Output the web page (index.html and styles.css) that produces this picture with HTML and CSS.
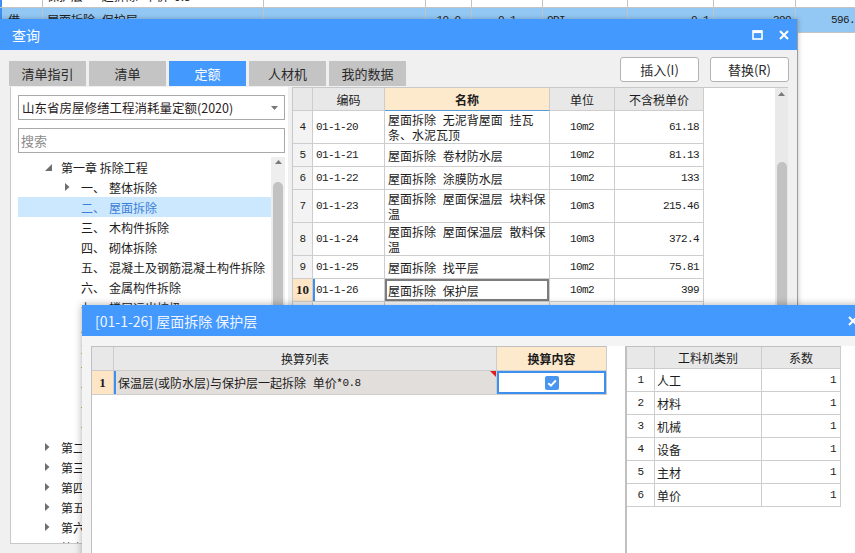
FILE: index.html
```html
<!DOCTYPE html>
<html lang="zh-CN">
<head>
<meta charset="utf-8">
<title>查询</title>
<link rel="stylesheet" href="styles.css">
</head>
<body>
<div class="sheet">
  <div class="c mark"></div>
  <div class="c">保护层 一起拆除 单价*0.8</div>
  <div class="c"></div><div class="c"></div><div class="c"></div><div class="c"></div><div class="c"></div><div class="c"></div><div class="c"></div>
  <div class="c sel mark">借</div>
  <div class="c sel">屋面拆除 保护层</div>
  <div class="c sel"></div>
  <div class="c sel mono ctr">10.0</div>
  <div class="c sel mono ctr">0.1</div>
  <div class="c sel mono">ODI</div>
  <div class="c sel mono rt">0.1</div>
  <div class="c sel mono rt">399</div>
  <div class="c sel mono rt">596.5</div>
</div>

<div class="qwin">
  <div class="qtitle">
    <span class="ttext">查询</span>
    <span class="ticons">
      <svg width="11" height="10" viewBox="0 0 11 10"><rect x="1" y="1" width="9" height="8" fill="none" stroke="#fff" stroke-width="1.6"/><rect x="1" y="0.5" width="9" height="2.6" fill="#fff"/></svg>
      <svg width="10" height="10" viewBox="0 0 10 10"><path d="M1 1 L9 9 M9 1 L1 9" stroke="#fff" stroke-width="2" fill="none"/></svg>
    </span>
  </div>
  <div class="toprow">
    <div class="tabs">
      <div class="tab">清单指引</div>
      <div class="tab">清单</div>
      <div class="tab on">定额</div>
      <div class="tab">人材机</div>
      <div class="tab">我的数据</div>
    </div>
    <div class="btns">
      <div class="btn">插入(I)</div>
      <div class="btn">替换(R)</div>
    </div>
  </div>
  <div class="main">
    <div class="left">
      <div class="combo"><span>山东省房屋修缮工程消耗量定额(2020)</span><svg width="7" height="4" viewBox="0 0 7 4"><polygon points="0,0 7,0 3.5,4" fill="#777"/></svg></div>
      <div class="search">搜索</div>
      <div class="tree">
        <div class="tlist">
          <div class="trow l0"><span class="tog"><svg width="7" height="7" viewBox="0 0 7 7"><polygon points="7,0 7,7 0,7" fill="#6e6e6e"/></svg></span><span>第一章 拆除工程</span></div>
          <div class="trow l1"><span class="tog"><svg width="5" height="8" viewBox="0 0 5 8"><polygon points="0,0 4.5,4 0,8" fill="#6e6e6e"/></svg></span><span class="no">一、</span><span>整体拆除</span></div>
          <div class="trow l1 sel"><span class="tog"></span><span class="no">二、</span><span>屋面拆除</span></div>
          <div class="trow l1"><span class="tog"></span><span class="no">三、</span><span>木构件拆除</span></div>
          <div class="trow l1"><span class="tog"></span><span class="no">四、</span><span>砌体拆除</span></div>
          <div class="trow l1"><span class="tog"></span><span class="no">五、</span><span>混凝土及钢筋混凝土构件拆除</span></div>
          <div class="trow l1"><span class="tog"></span><span class="no">六、</span><span>金属构件拆除</span></div>
          <div class="trow l1"><span class="tog"></span><span class="no">七、</span><span>楼层运出垃圾</span></div>
          <div class="trow l1"><span class="tog"></span><span class="no">八、</span><span>楼地面拆除</span></div>
          <div class="trow l1"><span class="tog"></span><span class="no">九、</span><span>墙面拆除</span></div>
          <div class="trow l1"><span class="tog"></span><span class="no">十、</span><span>门窗拆除</span></div>
          <div class="trow l1"><span class="tog"></span><span class="no">十一、</span><span>装饰拆除</span></div>
          <div class="trow l1"><span class="tog"></span><span class="no">十二、</span><span>管道拆除</span></div>
          <div class="trow l1"><span class="tog"></span><span class="no">十三、</span><span>其他拆除</span></div>
          <div class="trow l0"><span class="tog"><svg width="5" height="8" viewBox="0 0 5 8"><polygon points="0,0 4.5,4 0,8" fill="#6e6e6e"/></svg></span><span>第二章 土石方工程</span></div>
          <div class="trow l0"><span class="tog"><svg width="5" height="8" viewBox="0 0 5 8"><polygon points="0,0 4.5,4 0,8" fill="#6e6e6e"/></svg></span><span>第三章 地基基础工程</span></div>
          <div class="trow l0"><span class="tog"><svg width="5" height="8" viewBox="0 0 5 8"><polygon points="0,0 4.5,4 0,8" fill="#6e6e6e"/></svg></span><span>第四章 砌筑工程</span></div>
          <div class="trow l0"><span class="tog"><svg width="5" height="8" viewBox="0 0 5 8"><polygon points="0,0 4.5,4 0,8" fill="#6e6e6e"/></svg></span><span>第五章 混凝土工程</span></div>
          <div class="trow l0"><span class="tog"><svg width="5" height="8" viewBox="0 0 5 8"><polygon points="0,0 4.5,4 0,8" fill="#6e6e6e"/></svg></span><span>第六章 木结构工程</span></div>
          <div class="trow l0"><span class="tog"><svg width="5" height="8" viewBox="0 0 5 8"><polygon points="0,0 4.5,4 0,8" fill="#6e6e6e"/></svg></span><span>第七章 屋面工程</span></div>
        </div>
        <div class="vscroll">
          <svg class="up" width="7" height="4" viewBox="0 0 7 4"><polygon points="0,4 3.5,0 7,4" fill="#7a7a7a"/></svg>
          <div class="thumb t1"></div>
        </div>
      </div>
    </div>
    <div class="right">
      <div class="gmain">
        <div class="h"></div><div class="h">编码</div><div class="h peach">名称</div><div class="h">单位</div><div class="h">不含税单价</div>

        <div class="rn">4</div><div class="code">01-1-20</div><div class="name">屋面拆除 无泥背屋面 挂瓦<br>条、水泥瓦顶</div><div class="unit">10m2</div><div class="price">61.18</div>
        <div class="rn">5</div><div class="code">01-1-21</div><div class="name">屋面拆除 卷材防水层</div><div class="unit">10m2</div><div class="price">81.13</div>
        <div class="rn">6</div><div class="code">01-1-22</div><div class="name">屋面拆除 涂膜防水层</div><div class="unit">10m2</div><div class="price">133</div>
        <div class="rn">7</div><div class="code">01-1-23</div><div class="name">屋面拆除 屋面保温层 块料保<br>温</div><div class="unit">10m3</div><div class="price">215.46</div>
        <div class="rn">8</div><div class="code">01-1-24</div><div class="name">屋面拆除 屋面保温层 散料保<br>温</div><div class="unit">10m3</div><div class="price">372.4</div>
        <div class="rn">9</div><div class="code">01-1-25</div><div class="name">屋面拆除 找平层</div><div class="unit">10m2</div><div class="price">75.81</div>
        <div class="rn cur">10</div><div class="code cur">01-1-26</div><div class="name cur">屋面拆除 保护层</div><div class="unit">10m2</div><div class="price">399</div>
        <div class="rn">11</div><div class="code">01-1-27</div><div class="name">屋面拆除 保温层与保护层一<br>起拆除</div><div class="unit">10m2</div><div class="price">564.35</div>
      </div>
      <div class="blank"></div>
      <div class="vscroll2">
        <svg class="up" width="7" height="4" viewBox="0 0 7 4"><polygon points="0,4 3.5,0 7,4" fill="#7a7a7a"/></svg>
        <div class="thumb t2"></div>
      </div>
    </div>
  </div>
</div>

<div class="dlg">
  <div class="dtitle">
    <span class="dtext">[01-1-26] 屋面拆除 保护层</span>
    <svg class="dclose" width="10" height="10" viewBox="0 0 10 10"><path d="M1 1 L9 9 M9 1 L1 9" stroke="#fff" stroke-width="2" fill="none"/></svg>
  </div>
  <div class="dbody">
    <div class="dleft">
      <div class="gconv">
        <div class="h"></div><div class="h">换算列表</div><div class="h peach b">换算内容</div>
        <div class="rn cur">1</div>
        <div class="item">保温层(或防水层)与保护层一起拆除 单价*<span class="mono">0.8</span><span class="flag"></span></div>
        <div class="chk"><svg width="14" height="14" viewBox="0 0 14 14"><rect width="14" height="14" rx="2" fill="#4896f0"/><path d="M3.3 7.2 L6 9.7 L10.8 4.5" stroke="#fff" stroke-width="1.9" fill="none"/></svg></div>
      </div>
    </div>
    <div class="dright">
      <div class="gcoef">
        <div class="h"></div><div class="h">工料机类别</div><div class="h">系数</div>
        <div class="n">1</div><div class="k">人工</div><div class="v">1</div>
        <div class="n">2</div><div class="k">材料</div><div class="v">1</div>
        <div class="n">3</div><div class="k">机械</div><div class="v">1</div>
        <div class="n">4</div><div class="k">设备</div><div class="v">1</div>
        <div class="n">5</div><div class="k">主材</div><div class="v">1</div>
        <div class="n">6</div><div class="k">单价</div><div class="v">1</div>
      </div>
    </div>
  </div>
</div>
</body>
</html>
```

FILE: styles.css
```css
* { box-sizing: border-box; }
html, body { margin: 0; padding: 0; }
body {
  width: 855px;
  height: 553px;
  overflow: hidden;
  position: relative;
  background: #fff;
  font-family: "Noto Sans CJK SC", "Noto Sans", sans-serif;
  font-size: 12px;
  color: #1c1c1c;
}

.mono, .code, .unit, .price, .gmain .rn, .gcoef .n, .gcoef .v {
  font-family: "Liberation Mono", "DejaVu Sans Mono", monospace;
  font-size: 11px;
  letter-spacing: -0.6px;
}

/* background spreadsheet */
.sheet {
  margin-top: -16px;
  display: grid;
  grid-template-columns: 43px 221px 162px 46px 71px 85px 86px 82px 70px;
  grid-template-rows: 24px 25px;
  width: 866px;
  word-spacing: 4px;
}
.sheet .c {
  border-right: 1px solid #c4c4c4;
  border-bottom: 1px solid #c4c4c4;
  line-height: 24px;
  white-space: nowrap;
  overflow: hidden;
  padding: 0 4px;
}
.sheet .sel { background: #93c8f5; }
.sheet .mark { box-shadow: inset 2px 0 #3d8ff0; padding-left: 8px; }
.sheet .ctr { text-align: center; }
.sheet .rt { text-align: right; }

/* query window */
.qwin {
  position: absolute;
  left: 0;
  top: 19px;
  width: 798px;
  height: 560px;
  background: #f0f0f0;
  border-right: 1px solid #9c9c9c;
  box-shadow: 0 0 5px rgba(0, 0, 0, 0.25);
  display: flex;
  flex-direction: column;
}
.qtitle {
  height: 31px;
  flex: none;
  background: #4499ff;
  color: #fff;
  display: flex;
  align-items: center;
  padding: 0 8px 0 12px;
  font-size: 14px;
}
.ttext { flex: 1; }
.ticons { display: flex; align-items: center; gap: 16px; }

.toprow {
  height: 36px;
  flex: none;
  display: flex;
  justify-content: space-between;
  padding: 7px 8px 0 9px;
}
.tabs { display: flex; gap: 3px; align-self: flex-end; }
.tab {
  width: 77px;
  height: 25px;
  background: #c4c4c4;
  color: #2a2a2a;
  font-size: 13px;
  display: flex;
  align-items: center;
  justify-content: center;
}
.tab.on { background: #4499ff; color: #fff; }
.btns { display: flex; gap: 11px; align-self: flex-start; }
.btn {
  width: 79px;
  height: 25px;
  border: 1px solid #b3b3b3;
  border-radius: 3px;
  background: #fff;
  color: #2a2a2a;
  font-size: 13px;
  display: flex;
  align-items: center;
  justify-content: center;
}

.main {
  flex: 1;
  display: flex;
  align-items: flex-start;
  padding: 1px 0 0 10px;
  min-height: 0;
}
.left {
  width: 278px;
  height: 457px;
  flex: none;
  background: #fff;
  border-left: 1px solid #c8c8c8;
  border-bottom: 1px solid #c8c8c8;
  padding: 8px 3px 0 7px;
  display: flex;
  flex-direction: column;
}
.combo {
  height: 25px;
  flex: none;
  border: 1px solid #a9a9a9;
  display: flex;
  align-items: center;
  justify-content: space-between;
  padding: 0 6px 0 3px;
  font-size: 12.5px;
  color: #2b1d1d;
}
.search {
  height: 25px;
  flex: none;
  margin-top: 8px;
  border: 1px solid #a9a9a9;
  padding-left: 2px;
  display: flex;
  align-items: center;
  color: #8c8c8c;
  font-size: 13px;
}
.tree {
  margin-top: 4px;
  flex: 1;
  display: flex;
  min-height: 0;
  overflow: hidden;
}
.tlist { width: 253px; flex: none; }
.trow {
  height: 20px;
  display: flex;
  align-items: center;
  white-space: nowrap;
  font-size: 12px;
}
.trow.l0 { padding-left: 27px; }
.trow.l1 { padding-left: 47px; }
.trow.sel { background: #cce8ff; color: #3d7fd6; }
.tog { width: 16px; height: 20px; flex: none; display: flex; align-items: center; }
.no { width: 28px; flex: none; }
.vscroll {
  width: 14px;
  flex: none;
  background: #eeeeee;
  display: flex;
  flex-direction: column;
  align-items: center;
}
.vscroll .up { margin-top: 3px; flex: none; }
.thumb { background: #c2c2c2; border-radius: 5px 5px 0 0; width: 10px; flex: 1; }
.t1 { margin-top: 18px; }

.right {
  margin-left: 4px;
  width: 496px;
  height: 480px;
  flex: none;
  background: #fff;
  border-left: 1px solid #c8c8c8;
  border-top: 1px solid #c8c8c8;
  display: flex;
}
.gmain {
  width: 411px;
  flex: none;
  display: grid;
  grid-template-columns: 20px 72px 165px 65px 89px;
  grid-template-rows: 23px 33px 23px 23px 33px 33px 23px 23px 33px;
  align-self: flex-start;
}
.gmain > div, .gconv > div, .gcoef > div {
  border-right: 1px solid #cdcdcd;
  border-bottom: 1px solid #cdcdcd;
  display: flex;
  align-items: center;
  overflow: hidden;
  white-space: nowrap;
  position: relative;
}
.h { background: #e8e8e8; justify-content: center; font-size: 12px; }
.h.peach { background: #fde9cc; }
.gmain .h.peach { font-weight: bold; border-bottom-color: #5b9bd5; }
.h.b { font-weight: bold; }
.gmain .rn { background: #f3f3f3; justify-content: center; }
.code { padding-left: 3px; }
.name { padding-left: 3px; line-height: 15px; word-spacing: 4px; }
.unit { justify-content: center; }
.price { justify-content: flex-end; padding-right: 4px; }
.rn.cur {
  background: #fde5c5;
  font-family: "Liberation Serif", serif;
  font-weight: bold;
  font-size: 13px;
  letter-spacing: 0;
  justify-content: center;
}
.code.cur { box-shadow: inset 2px 0 #3d8ff0; }
.name.cur { box-shadow: inset 0 0 0 2px #7d7d7d; }
.blank { flex: 1; }
.vscroll2 {
  width: 13px;
  flex: none;
  background: #e9e9e9;
  display: flex;
  flex-direction: column;
  align-items: center;
}
.vscroll2 .up { margin-top: 4px; flex: none; }
.t2 { margin-top: 66px; }

/* conversion dialog */
.dlg {
  position: absolute;
  left: 82px;
  top: 305px;
  width: 790px;
  height: 260px;
  background: #f4f4f4;
  box-shadow: 0 0 8px rgba(0, 0, 0, 0.32);
  display: flex;
  flex-direction: column;
}
.dtitle {
  height: 31px;
  flex: none;
  background: #4499ff;
  color: #eef5ff;
  font-size: 14px;
  display: flex;
  align-items: center;
  padding: 0 14px 0 13px;
}
.dtext { flex: 1; }
.dbody {
  flex: 1;
  display: flex;
  padding: 10px 0 0 9px;
}
.dleft {
  width: 534px;
  flex: none;
  background: #fff;
  border-left: 1px solid #c0c0c0;
}
.dright {
  flex: 1;
  background: #fff;
  border-left: 2px solid #c0c0c0;
}
.gconv {
  width: 515px;
  display: grid;
  grid-template-columns: 22px 383px 110px;
  grid-template-rows: 24px 24px;
  border-top: 1px solid #c0c0c0;
}
.gconv .item {
  background: #e2dedb;
  box-shadow: inset 2px 0 #3d8ff0;
  padding-left: 4px;
  word-spacing: 4px;
}
.gconv .item .mono { word-spacing: 0; }
.flag {
  position: absolute;
  top: 0;
  right: 0;
  width: 0;
  height: 0;
  border-top: 6px solid #e01e1e;
  border-left: 6px solid transparent;
}
.gconv .chk {
  justify-content: center;
  box-shadow: inset 0 0 0 2px #3d8ff0;
}
.gcoef {
  width: 214px;
  display: grid;
  grid-template-columns: 28px 107px 79px;
  grid-template-rows: 22px repeat(6, 23px);
  border-top: 1px solid #c0c0c0;
}
.gcoef .n { justify-content: center; }
.gcoef .k { padding-left: 2px; }
.gcoef .v { justify-content: flex-end; padding-right: 4px; }
```
